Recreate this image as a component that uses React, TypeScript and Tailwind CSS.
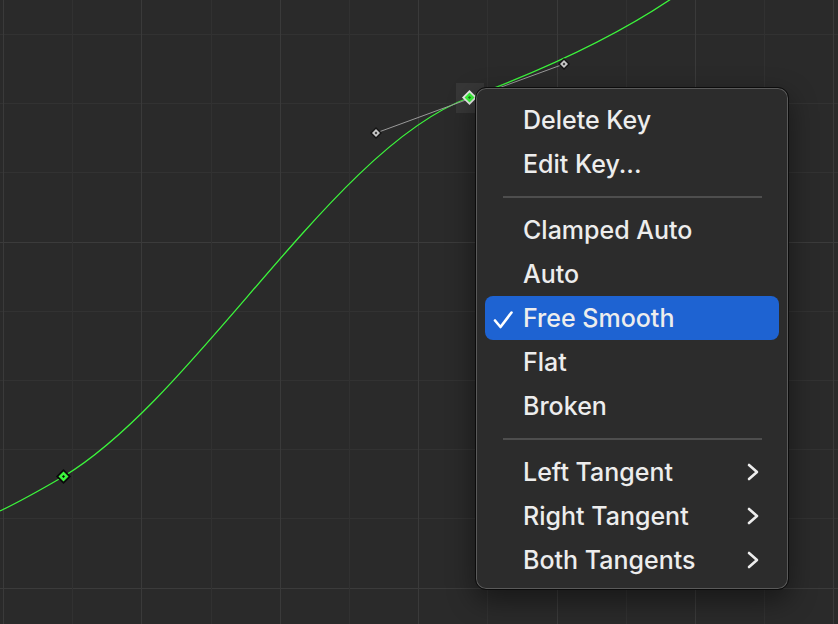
type MenuItem =
  | { kind: 'item'; label: string; checked?: boolean; submenu?: boolean }
  | { kind: 'separator' };

const items: MenuItem[] = [
  { kind: 'item', label: 'Delete Key' },
  { kind: 'item', label: 'Edit Key...' },
  { kind: 'separator' },
  { kind: 'item', label: 'Clamped Auto' },
  { kind: 'item', label: 'Auto' },
  { kind: 'item', label: 'Free Smooth', checked: true },
  { kind: 'item', label: 'Flat' },
  { kind: 'item', label: 'Broken' },
  { kind: 'separator' },
  { kind: 'item', label: 'Left Tangent', submenu: true },
  { kind: 'item', label: 'Right Tangent', submenu: true },
  { kind: 'item', label: 'Both Tangents', submenu: true },
];

const STEP = 69.2;

function diamond(cx: number, cy: number, r: number) {
  return `${cx},${cy - r} ${cx + r},${cy} ${cx},${cy + r} ${cx - r},${cy}`;
}

function CurveCanvas() {
  const verticals = Array.from({ length: 13 }, (_, k) => ({ x: Math.round(3 + STEP * k) + 0.5, major: k % 2 === 0 }));
  const horizontals = Array.from({ length: 9 }, (_, k) => ({ y: Math.round(34 + STEP * k) + 0.5, major: k % 5 === 3 }));

  return (
    <svg className="absolute inset-0" width={838} height={624} viewBox="0 0 838 624">
      {horizontals.map((h) => (
        <line key={`h${h.y}`} x1={0} x2={838} y1={h.y} y2={h.y} stroke={h.major ? '#3b3b3b' : '#323232'} strokeWidth={1} />
      ))}
      {verticals.map((v) => (
        <line key={`v${v.x}`} x1={v.x} x2={v.x} y1={0} y2={624} stroke={v.major ? '#3a3a3a' : '#313131'} strokeWidth={1} />
      ))}

      {/* selected key highlight */}
      <rect x={456} y={83} width={28} height={30} fill="#373737" />

      {/* curve */}
      <path
        d="M 0 511 C 22 500.5 43 488.5 63.5 476.5 C 198 395 334 146.6 469.5 97.5 C 560 63.6 640 25 700 -22"
        fill="none"
        stroke="#3cf53c"
        strokeWidth={1.3}
      />

      {/* tangent handles */}
      <line x1={376} y1={133} x2={564} y2={64} stroke="#9a9a9a" strokeWidth={1} />
      {[
        [376, 133],
        [564, 64],
      ].map(([x, y]) => (
        <g key={`t${x}`}>
          <polygon points={diamond(x, y, 6)} fill="#141414" />
          <polygon points={diamond(x, y, 4)} fill="#c6c6c6" />
          <polygon points={diamond(x, y, 1.4)} fill="#2a2a2a" />
        </g>
      ))}

      {/* keys */}
      <polygon points={diamond(63.5, 476.5, 7.5)} fill="#0a0a0a" />
      <polygon points={diamond(63.5, 476.5, 5)} fill="#3cf53c" />
      <polygon points={diamond(63.5, 476.5, 1.5)} fill="#0a0a0a" />

      <polygon points={diamond(469.5, 97.5, 7.5)} fill="#ececec" />
      <polygon points={diamond(469.5, 97.5, 5)} fill="#3cf53c" />
      <polygon points={diamond(469.5, 97.5, 1.6)} fill="#1f7a1f" />
    </svg>
  );
}

function ContextMenu() {
  return (
    <div className="absolute left-[475px] top-[87px] w-[314px] rounded-[11px] border border-[#0c0c0c] bg-[#2c2c2c] px-[9px] pt-[10px] pb-[7px] shadow-[inset_0_0_0_1px_rgba(255,255,255,0.22),0_10px_28px_rgba(0,0,0,0.45)]">
      {items.map((item, i) =>
        item.kind === 'separator' ? (
          <div key={`sep${i}`} className="flex h-[22px] items-center pl-[18px] pr-[17px]">
            <div className="h-[2px] w-full bg-[#4e4e4e]" />
          </div>
        ) : (
          <div
            key={item.label}
            className={`relative flex h-[44px] items-center rounded-[8px] pl-[38px] pr-[20px] ${
              item.checked ? 'bg-[#1e63d2]' : ''
            }`}
          >
            {item.checked && (
              <svg className="absolute left-[8px] top-[14px]" width={20} height={20} viewBox="0 0 20 20">
                <path d="M2 10.5 L7.5 17 L18.5 2.5" fill="none" stroke="#ffffff" strokeWidth={2.6} strokeLinecap="round" strokeLinejoin="round" />
              </svg>
            )}
            <span className="flex-1 text-[25px] font-medium leading-none text-[#ededed] [font-family:Inter,'Noto_Sans',sans-serif]">
              {item.label}
            </span>
            {item.submenu && (
              <svg width={12} height={18} viewBox="0 0 12 18">
                <path d="M2 2 L10 9 L2 16" fill="none" stroke="#ededed" strokeWidth={2.6} strokeLinecap="round" strokeLinejoin="round" />
              </svg>
            )}
          </div>
        ),
      )}
    </div>
  );
}

export default function App() {
  return (
    <div className="relative h-[624px] w-[838px] overflow-hidden bg-[#2a2a2a]">
      <CurveCanvas />
      <ContextMenu />
    </div>
  );
}
